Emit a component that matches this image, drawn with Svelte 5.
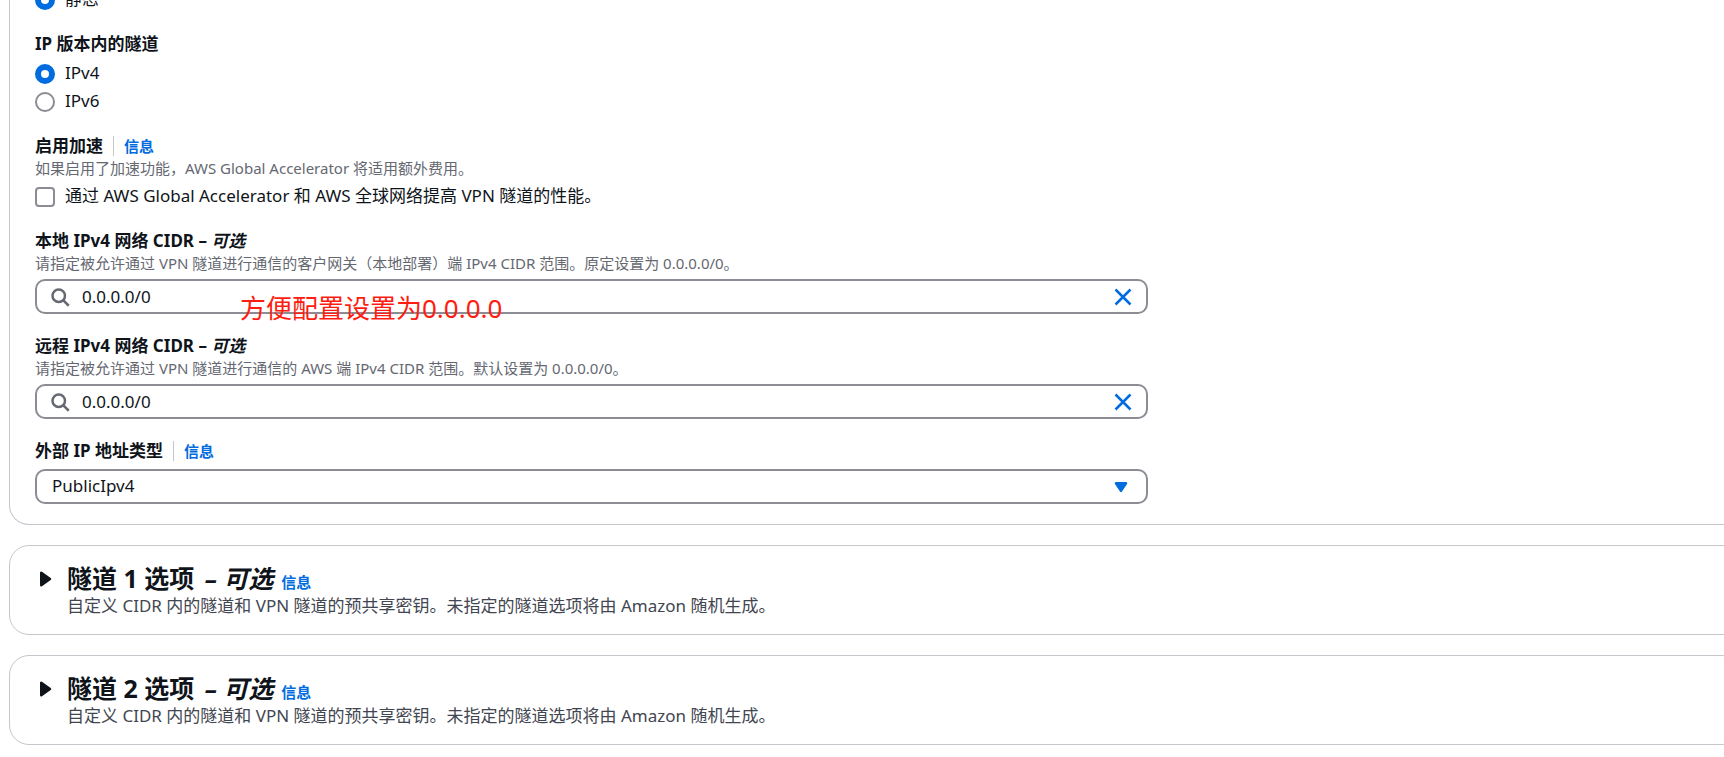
<script>
  let routing = $state('static');
  let insideIp = $state('ipv4');
  let accelerate = $state(false);
  let localCidr = $state('0.0.0.0/0');
  let remoteCidr = $state('0.0.0.0/0');
  let outsideType = $state('PublicIpv4');
  let open = $state({ 1: false, 2: false });
</script>

{#snippet cidrField(id, value, set)}
  <div class="control">
    <svg class="search" viewBox="0 0 16 16" aria-hidden="true">
      <circle cx="7" cy="7" r="5" />
      <path d="M15 15l-4.5-4.5" />
    </svg>
    <input {id} type="text" {value} oninput={(e) => set(e.currentTarget.value)} />
    <button class="clear" type="button" aria-label="清除" onclick={() => set('')}>
      <svg viewBox="0 0 16 16" aria-hidden="true"><path d="M2 2l12 12M14 2L2 14" /></svg>
    </button>
  </div>
{/snippet}

<main>
  <section class="card form">
    <div class="column">
      <label class="choice">
        <input type="radio" name="routing" value="static" bind:group={routing} />
        <span>静态</span>
      </label>

      <fieldset>
        <legend>IP 版本内的隧道</legend>
        <div class="choices">
          <label class="choice">
            <input type="radio" name="inside" value="ipv4" bind:group={insideIp} />
            <span>IPv4</span>
          </label>
          <label class="choice">
            <input type="radio" name="inside" value="ipv6" bind:group={insideIp} />
            <span>IPv6</span>
          </label>
        </div>
      </fieldset>

      <div class="field">
        <div class="title">
          <span>启用加速</span>
          <a class="info divided" href="#acceleration">信息</a>
        </div>
        <p class="hint">如果启用了加速功能，AWS Global Accelerator 将适用额外费用。</p>
        <label class="choice spaced">
          <input type="checkbox" bind:checked={accelerate} />
          <span>通过 AWS Global Accelerator 和 AWS 全球网络提高 VPN 隧道的性能。</span>
        </label>
      </div>

      <div class="field annotated">
        <label class="title" for="local">本地 IPv4 网络 CIDR –&nbsp;<em>可选</em></label>
        <p class="hint">请指定被允许通过 VPN 隧道进行通信的客户网关（本地部署）端 IPv4 CIDR 范围。原定设置为 0.0.0.0/0。</p>
        {@render cidrField('local', localCidr, (v) => (localCidr = v))}
        <span class="note">方便配置设置为0.0.0.0</span>
      </div>

      <div class="field">
        <label class="title" for="remote">远程 IPv4 网络 CIDR –&nbsp;<em>可选</em></label>
        <p class="hint">请指定被允许通过 VPN 隧道进行通信的 AWS 端 IPv4 CIDR 范围。默认设置为 0.0.0.0/0。</p>
        {@render cidrField('remote', remoteCidr, (v) => (remoteCidr = v))}
      </div>

      <div class="field">
        <div class="title">
          <label for="outside">外部 IP 地址类型</label>
          <a class="info divided" href="#outside-ip">信息</a>
        </div>
        <div class="control">
          <select id="outside" bind:value={outsideType}>
            <option>PublicIpv4</option>
            <option>PrivateIpv4</option>
          </select>
          <svg class="caret" viewBox="0 0 16 16" aria-hidden="true"><path d="M4 5h8l-4 6z" /></svg>
        </div>
      </div>
    </div>
  </section>

  {#each [1, 2] as n}
    <section class="card tunnel">
      <button
        class="toggle"
        type="button"
        aria-label="隧道 {n} 选项"
        aria-expanded={open[n]}
        onclick={() => (open[n] = !open[n])}
      >
        <svg class:open={open[n]} viewBox="0 0 16 16" aria-hidden="true"><path d="M5 3v10l7-5z" /></svg>
      </button>
      <div>
        <div class="heading">
          <h2>隧道 {n} 选项 <em>– 可选</em></h2>
          <a class="info" href="#tunnel-{n}">信息</a>
        </div>
        <p>自定义 CIDR 内的隧道和 VPN 隧道的预共享密钥。未指定的隧道选项将由 Amazon 随机生成。</p>
      </div>
    </section>
  {/each}
</main>

<style>
  :global(body) {
    background: #fff;
    overflow: hidden;
  }
  main {
    display: flex;
    flex-direction: column;
    gap: 20px;
    margin: -13px -18px 0 9px;
    font: 17px/25px 'Noto Sans', 'Noto Sans CJK SC', sans-serif;
    color: #0f141a;
  }
  p,
  h2,
  fieldset,
  legend {
    margin: 0;
    padding: 0;
    border: 0;
  }
  .card {
    border: 1px solid #c6c6cd;
    border-radius: 20px;
    background: #fff;
  }
  .form {
    display: grid;
    grid-template-columns: 2fr 1fr;
    gap: 12px;
    border-top: 0;
    border-radius: 0 0 20px 20px;
    padding: 0 25px 20px;
  }
  .column {
    display: flex;
    flex-direction: column;
    gap: 20px;
    min-width: 0;
  }
  legend,
  .title {
    padding-bottom: 2px;
    line-height: 23px;
    font-weight: 700;
  }
  .title {
    display: flex;
    align-items: center;
  }
  .choices {
    display: flex;
    flex-direction: column;
    gap: 3px;
    margin-top: 4px;
  }
  .choice {
    display: flex;
    align-items: center;
    gap: 10px;
  }
  .choice span {
    padding-bottom: 2px;
    line-height: 23px;
  }
  .spaced {
    margin-top: 5px;
  }
  .choice input {
    appearance: none;
    box-sizing: border-box;
    flex: none;
    width: 20px;
    height: 20px;
    margin: 0;
    border: 2px solid #8c8c94;
    border-radius: 4px;
    background: #fff;
  }
  .choice input[type='radio'] {
    border-radius: 50%;
  }
  .choice input[type='radio']:checked {
    border: 6px solid #006ce0;
  }
  .choice input[type='checkbox']:checked {
    border-color: #006ce0;
    background: #006ce0;
  }
  .info {
    font-size: 15px;
    line-height: 20px;
    font-weight: 700;
    color: #006ce0;
    text-decoration: none;
  }
  .divided {
    margin-left: 10px;
    padding-left: 10px;
    border-left: 1px solid #c6c6cd;
  }
  .hint {
    padding-bottom: 2px;
    font-size: 15px;
    line-height: 18px;
    color: #656871;
  }
  .control {
    display: flex;
    align-items: center;
    box-sizing: border-box;
    height: 35px;
    margin-top: 5px;
    border: 2px solid #8c8c94;
    border-radius: 10px;
    background: #fff;
  }
  .control input,
  .control select {
    appearance: none;
    flex: 1;
    min-width: 0;
    height: 100%;
    margin: 0;
    padding: 0;
    border: 0;
    outline: 0;
    background: none;
    font: inherit;
    color: inherit;
  }
  .control select {
    padding: 0 40px 2px 15px;
  }
  svg {
    display: block;
    flex: none;
    width: 20px;
    height: 20px;
  }
  .search {
    margin: 0 12px 0 13px;
    fill: none;
    stroke: #656871;
    stroke-width: 2;
  }
  .clear {
    margin: 0 13px 0 0;
    padding: 0;
    border: 0;
    background: none;
    fill: none;
    stroke: #006ce0;
    stroke-width: 2;
  }
  .caret {
    margin: 0 15px 0 -35px;
    pointer-events: none;
    fill: #006ce0;
    stroke: #006ce0;
    stroke-width: 2;
    stroke-linejoin: round;
  }
  .annotated {
    position: relative;
  }
  .note {
    position: absolute;
    left: 205px;
    top: 61px;
    font-size: 26px;
    line-height: 36px;
    white-space: nowrap;
    color: #ff1c10;
    pointer-events: none;
  }
  .tunnel {
    display: flex;
    gap: 12px;
    padding: 17px 25px 16px;
    color: #424650;
  }
  .toggle {
    align-self: flex-start;
    margin: 6px 0;
    padding: 0;
    border: 0;
    background: none;
    fill: #0f141a;
    stroke: #0f141a;
    stroke-width: 2;
    stroke-linejoin: round;
  }
  .toggle .open {
    transform: rotate(90deg);
  }
  .heading {
    display: flex;
    align-items: baseline;
    gap: 8px;
    line-height: 30px;
  }
  h2 {
    font-size: 25px;
    line-height: 30px;
    color: #0f141a;
  }
  h2 em {
    margin-left: 4px;
  }
</style>
